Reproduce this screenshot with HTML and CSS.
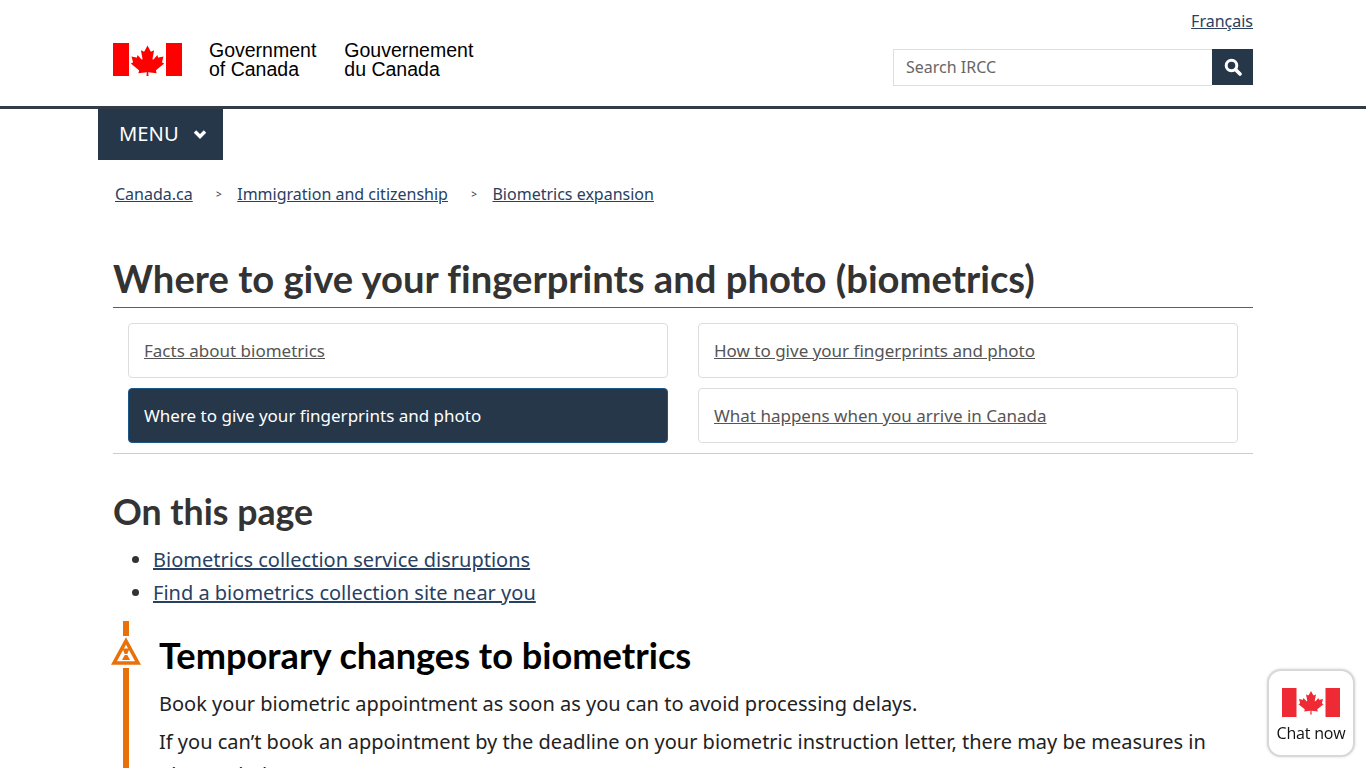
FILE: index.html
```html
<!DOCTYPE html>
<html lang="en">
<head>
<meta charset="utf-8">
<title>Where to give your fingerprints and photo (biometrics)</title>
<link rel="stylesheet" href="styles.css">
</head>
<body>
<header class="site-header">
  <div class="container header-inner">
    <div class="brand">
      <svg class="flag" viewBox="0 0 69 33" width="69" height="33" aria-hidden="true">
        <rect x="0" y="0" width="16" height="33" fill="#f00"/>
        <rect x="53" y="0" width="16" height="33" fill="#f00"/>
        <path fill="#f00" d="M34.500 2.500L31.600 8.000C31.200 8.700 30.600 8.600 30.000 8.300L27.900 7.200L29.400 15.300C29.700 16.800 28.800 16.800 28.300 16.200L24.600 12.100L24.000 14.200C23.900 14.500 23.600 14.700 23.200 14.600L18.500 13.600L19.700 18.100C20.000 19.000 20.200 19.400 19.500 19.700L17.800 20.500L25.700 26.900C26.000 27.200 26.200 27.600 26.000 28.100L25.300 30.300L33.800 29.300L33.500 33.000H35.500L35.200 29.300L43.700 30.300L43.000 28.100C42.800 27.600 43.000 27.200 43.300 26.900L51.200 20.500L49.500 19.700C48.800 19.400 49.000 19.000 49.300 18.100L50.500 13.600L45.800 14.600C45.400 14.700 45.100 14.500 45.000 14.200L44.400 12.100L40.700 16.200C40.200 16.800 39.300 16.800 39.600 15.300L41.100 7.200L39.000 8.300C38.400 8.600 37.800 8.700 37.400 8.000Z"/>
      </svg>
      <div class="wordmark"><span>Government</span><span>of Canada</span></div>
      <div class="wordmark"><span>Gouvernement</span><span>du Canada</span></div>
    </div>
    <div class="tools">
      <a class="lang" href="#">Français</a>
      <form class="search">
        <input class="search-input" type="text" placeholder="Search IRCC">
        <button class="search-btn" type="button" aria-label="Search">
          <svg viewBox="0 0 18 18" width="18" height="18" aria-hidden="true">
            <circle cx="7.500" cy="7.500" r="5.300" fill="none" stroke="#fff" stroke-width="3"/>
            <path d="M11.500 11.500L16 16" stroke="#fff" stroke-width="3.600" stroke-linecap="round"/>
          </svg>
        </button>
      </form>
    </div>
  </div>
</header>
<div class="menu-wrap">
  <button class="menu-btn" type="button">MENU
    <svg viewBox="0 0 14 10" width="14" height="10" aria-hidden="true"><path d="M2 2.500L7 7.500L12 2.500" fill="none" stroke="#fff" stroke-width="3.400"/></svg>
  </button>
</div>
<nav class="container crumbs">
  <a href="#">Canada.ca</a><span class="sep">&gt;</span><a href="#">Immigration and citizenship</a><span class="sep">&gt;</span><a href="#">Biometrics expansion</a>
</nav>
<main class="container">
  <h1>Where to give your fingerprints and photo (biometrics)</h1>
  <div class="tabs">
    <a class="tab" href="#">Facts about biometrics</a>
    <a class="tab" href="#">How to give your fingerprints and photo</a>
    <a class="tab active" href="#">Where to give your fingerprints and photo</a>
    <a class="tab" href="#">What happens when you arrive in Canada</a>
  </div>
  <h2 class="toc-title">On this page</h2>
  <ul class="toc">
    <li><a href="#">Biometrics collection service disruptions</a></li>
    <li><a href="#">Find a biometrics collection site near you</a></li>
  </ul>
  <section class="alert">
    <svg class="alert-icon" viewBox="0 0 30 32" width="30" height="32" aria-hidden="true">
      <path d="M15 5L27 27H3Z" fill="#fff" stroke="#e8710a" stroke-width="3.600"/>
      <path d="M11.500 12.500H18.500L16.300 18H13.700Z" fill="#e8710a"/>
      <path d="M13.700 19H16.300L19 24H11Z" fill="#e8710a"/>
    </svg>
    <h2>Temporary changes to biometrics</h2>
    <p>Book your biometric appointment as soon as you can to avoid processing delays.</p>
    <p>If you can’t book an appointment by the deadline on your biometric instruction letter, there may be measures in place to help you.</p>
  </section>
</main>
<aside class="chat">
  <svg viewBox="0 0 58 29" width="58" height="29" aria-hidden="true">
    <rect x="0" y="0" width="14.500" height="29" fill="#ee2a35"/>
    <rect x="43.500" y="0" width="14.500" height="29" fill="#ee2a35"/>
    <path fill="#ee2a35" d="M29 3L26.800 7C26.500 7.500 26 7.400 25.600 7.200L24 6.300L25.200 12.500C25.400 13.500 24.700 13.500 24.300 13.100L21.500 10L21 11.500C20.900 11.800 20.700 11.900 20.400 11.800L17 11.100L17.900 14.400C18.100 15.100 18.300 15.400 17.700 15.600L16.500 16.200L22.400 21C22.700 21.200 22.800 21.500 22.700 21.900L22.100 23.500L28.500 22.800L28.300 26.500H29.700L29.500 22.800L35.900 23.500L35.300 21.900C35.200 21.500 35.300 21.200 35.600 21L41.500 16.200L40.300 15.600C39.700 15.400 39.900 15.100 40.100 14.400L41 11.100L37.600 11.800C37.300 11.900 37.100 11.800 37 11.500L36.500 10L33.700 13.100C33.300 13.500 32.600 13.500 32.800 12.500L34 6.300L32.400 7.200C32 7.400 31.500 7.500 31.200 7Z"/>
  </svg>
  <span>Chat now</span>
</aside>
</body>
</html>
```
FILE: styles.css
```css
* { box-sizing: border-box; }
html, body { margin: 0; height: 768px; overflow: hidden; }
body { font-family: "Noto Sans", sans-serif; color: #333; background: #fff; font-variant-ligatures: none; }
a { color: #284162; }
.container { width: 1140px; margin: 0 auto; }
.site-header { height: 109px; border-bottom: 3px solid #333b47; }
.header-inner { display: flex; justify-content: space-between; height: 106px; }
.brand { display: flex; align-items: flex-start; padding-top: 43px; }
.flag { flex: none; margin-right: 27px; }
.wordmark { display: flex; flex-direction: column; margin-top: -2px; margin-right: 28px; font-family: "Liberation Sans", Arial, sans-serif; font-size: 19.500px; line-height: 18.500px; color: #000; }
.tools { display: flex; flex-direction: column; align-items: flex-end; padding-top: 10px; width: 360px; }
.lang { font-size: 16px; line-height: 22px; }
.search { display: flex; width: 360px; height: 37px; margin-top: 17px; }
.search-input { flex: 1; min-width: 0; height: 37px; padding: 0 12px 2px; border: 1px solid #dcdee1; border-right: 0; font: 16px "Noto Sans", sans-serif; color: #555; outline: none; }
.search-input::placeholder { color: #666; opacity: 1; }
.search-btn { width: 41px; height: 36px; border: 0; padding: 0; background: #26374a; display: flex; align-items: center; justify-content: center; }
.menu-wrap { width: 1170px; margin: 0 auto; }
.menu-btn { display: flex; align-items: center; gap: 14px; width: 125px; height: 51px; padding: 0 0 4px 21px; border: 0; background: #26374a; color: #fff; font: 400 20.200px "Noto Sans", sans-serif; }
.menu-btn svg { margin-top: 3px; }
.crumbs { display: flex; align-items: center; height: 24px; margin-top: 22px; padding-left: 2px; font-size: 16px; line-height: 24px; }
.sep { width: 44.500px; padding-left: 8px; text-align: center; font-size: 10px; color: #333; }
h1 { margin: 48px 0 0; height: 54px; border-bottom: 1px solid #af3c43; font: 700 38.200px/48px "Lato", sans-serif; color: #333; font-variant-ligatures: none; }
.tabs { display: grid; grid-template-columns: 540px 540px; column-gap: 30px; row-gap: 10px; padding: 15px 15px 10px; border-bottom: 1px solid #ccc; }
.tab { display: flex; align-items: center; height: 55px; padding: 0 15px; border: 1px solid #ddd; border-radius: 4px; font-size: 17px; color: #555; }
.tab.active { background: #26374a; border-color: #1c578a; color: #fff; text-decoration: none; }
.toc-title { margin: 35px 0 0; font: 700 35.700px/46px "Lato", sans-serif; color: #333; }
.toc { margin: 8px 0 0; padding-left: 40px; font-size: 20px; line-height: 33px; }
.alert { position: relative; margin-top: 12px; padding-left: 46px; height: 200px; }
.alert::before { content: ""; position: absolute; left: 10px; top: 0; bottom: 0; width: 6px; background: #e8710a; }
.alert-icon { position: absolute; left: -2px; top: 15px; background: #fff; }
.alert h2 { margin: 0; padding-top: 12px; font: 700 36.200px/44px "Lato", sans-serif; color: #000; }
.alert p { margin: 10px 0 0; font-size: 20px; line-height: 33px; color: #222; }
.alert p + p { margin-top: 5px; }
.chat { position: fixed; left: 1267px; top: 669px; width: 88px; height: 88px; padding-top: 17px; border: 2px solid #d8d8d8; border-radius: 14px; background: #fff; display: flex; flex-direction: column; align-items: center; font-family: "Open Sans", sans-serif; font-size: 16px; line-height: 22px; color: #111; box-shadow: 0 0 3px rgba(0,0,0,.15); }
.chat span { margin-top: 5px; letter-spacing: -0.200px; }
```
